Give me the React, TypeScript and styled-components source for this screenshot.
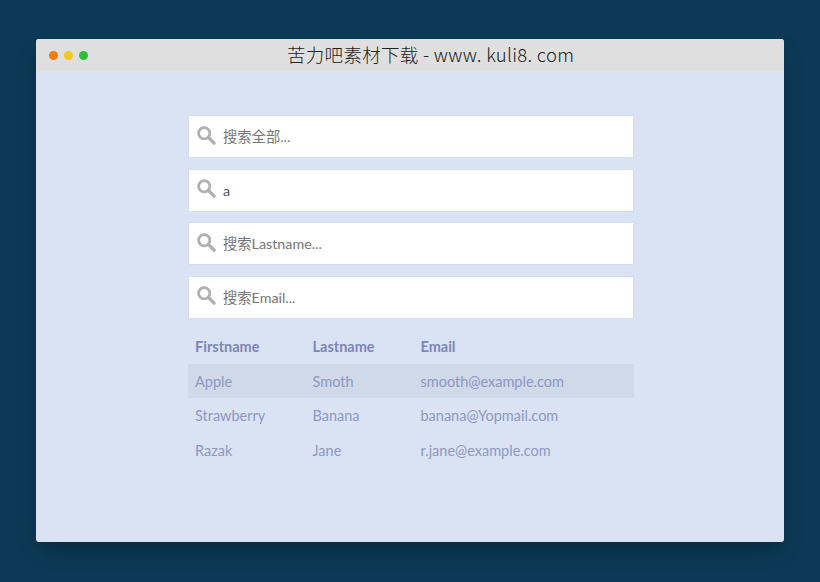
import { createGlobalStyle } from 'styled-components'
import styled from 'styled-components'

const GlobalStyle = createGlobalStyle`
  * {
    box-sizing: border-box;
  }
  html, body {
    margin: 0;
    height: 100%;
    background: #0c3a56;
  }
`

const SearchIcon = () => (
  <StyledIcon viewBox="0 0 20 20">
    <circle cx="7.6" cy="7.6" r="5.9" fill="none" stroke="#b0b0b0" strokeWidth="2.9" />
    <line x1="12" y1="12" x2="18" y2="18" stroke="#b0b0b0" strokeWidth="3.6" strokeLinecap="round" />
  </StyledIcon>
)

const filters = [
  { placeholder: '搜索全部...', value: '' },
  { placeholder: '搜索Firstname...', value: 'a' },
  { placeholder: '搜索Lastname...', value: '' },
  { placeholder: '搜索Email...', value: '' },
]

const rows = [
  { firstname: 'Apple', lastname: 'Smoth', email: 'smooth@example.com' },
  { firstname: 'Strawberry', lastname: 'Banana', email: 'banana@Yopmail.com' },
  { firstname: 'Razak', lastname: 'Jane', email: 'r.jane@example.com' },
]

const App = () => {
  return (
    <>
      <GlobalStyle />
      <StyledWindow>
        <StyledTitleBar>
          <StyledDots>
            <StyledDot color="#f57c0c" />
            <StyledDot color="#f2c81c" />
            <StyledDot color="#2fbf3a" />
          </StyledDots>
          <StyledTitle>苦力吧素材下载 - www. kuli8. com</StyledTitle>
        </StyledTitleBar>
        <StyledContent>
          <StyledFilters>
            {filters.map((filter) => (
              <StyledField key={filter.placeholder}>
                <SearchIcon />
                <StyledInput placeholder={filter.placeholder} defaultValue={filter.value} />
              </StyledField>
            ))}
          </StyledFilters>
          <StyledTable>
            <thead>
              <tr>
                <StyledHead $width={117.5}>Firstname</StyledHead>
                <StyledHead $width={108}>Lastname</StyledHead>
                <StyledHead>Email</StyledHead>
              </tr>
            </thead>
            <tbody>
              {rows.map((row) => (
                <StyledRow key={row.email}>
                  <StyledCell>{row.firstname}</StyledCell>
                  <StyledCell>{row.lastname}</StyledCell>
                  <StyledCell>{row.email}</StyledCell>
                </StyledRow>
              ))}
            </tbody>
          </StyledTable>
        </StyledContent>
      </StyledWindow>
    </>
  )
}

export default App

const StyledWindow = styled.div`
  width: 748px;
  height: 503px;
  margin: 0 auto;
  position: relative;
  top: 39px;
  border-radius: 3px;
  overflow: hidden;
  background: #d9e3f3;
  box-shadow: 0 10px 20px -4px rgba(0, 0, 0, 0.3);
`

const StyledTitleBar = styled.div`
  height: 32px;
  padding-left: 13px;
  display: flex;
  align-items: center;
  background: #dfdfdf;
`

const StyledDots = styled.div`
  display: flex;
  gap: 6px;
`

const StyledDot = styled.span<{ color: string }>`
  width: 9px;
  height: 9px;
  border-radius: 50%;
  background: ${(p) => p.color};
`

const StyledTitle = styled.div`
  margin: -2px 0 0 199px;
  white-space: nowrap;
  font-family: 'Noto Sans CJK SC', 'Liberation Sans', sans-serif;
  font-size: 18.5px;
  font-weight: 300;
  letter-spacing: 0.3px;
  color: #222;
`

const StyledContent = styled.div`
  width: 446px;
  margin-left: 152px;
  padding-top: 44px;
  font-family: Lato, 'Noto Sans CJK SC', sans-serif;
`

const StyledFilters = styled.div`
  display: flex;
  flex-direction: column;
  gap: 10.6px;
`

const StyledField = styled.label`
  height: 43px;
  padding-left: 8px;
  display: flex;
  align-items: center;
  gap: 7px;
  background: #fff;
  border: 1px solid #d5deec;
`

const StyledIcon = styled.svg`
  width: 19px;
  height: 19px;
  flex: none;
  margin-top: -3px;
`

const StyledInput = styled.input`
  flex: 1;
  min-width: 0;
  border: 0;
  outline: 0;
  padding: 0;
  font-family: inherit;
  font-size: 14.3px;
  color: #555;

  &::placeholder {
    color: #757575;
    opacity: 1;
  }
`

const StyledTable = styled.table`
  width: 100%;
  margin-top: 10px;
  border-collapse: collapse;
  table-layout: fixed;
  font-size: 14.5px;
`

const StyledHead = styled.th<{ $width?: number }>`
  width: ${(p) => (p.$width ? `${p.$width}px` : 'auto')};
  height: 35px;
  padding: 0 7px;
  text-align: left;
  font-weight: 700;
  color: #7d86b8;
`

const StyledRow = styled.tr`
  &:first-child {
    background: #cfd9e8;
  }
`

const StyledCell = styled.td`
  height: 34.6px;
  padding: 0 7px;
  color: #8e97c2;
`
